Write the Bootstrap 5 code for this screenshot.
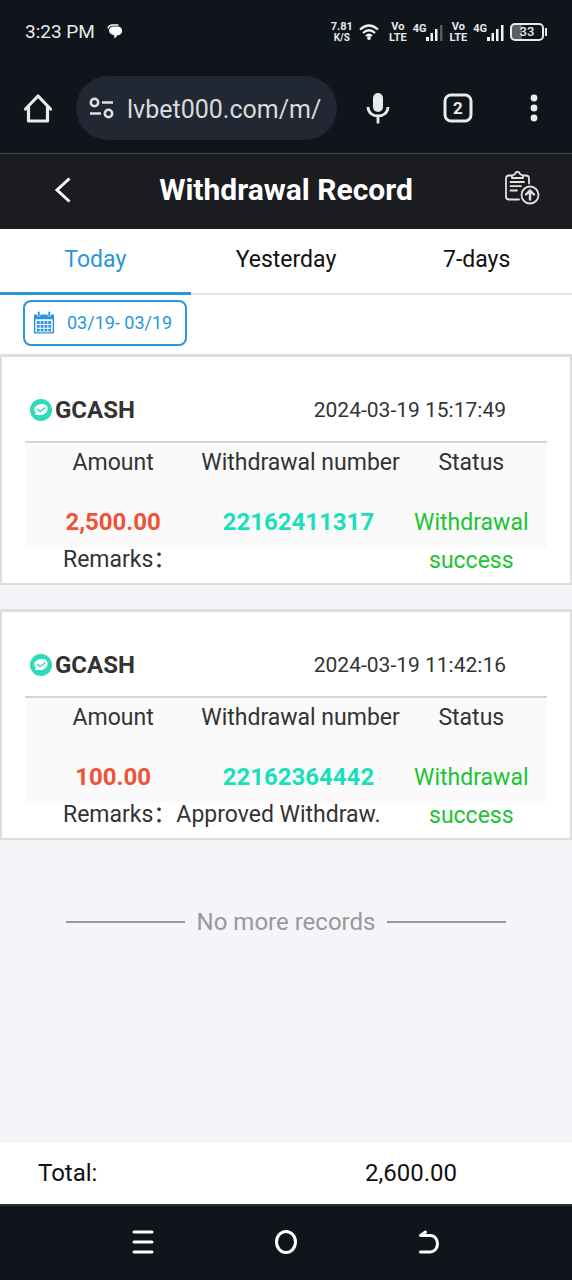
<!DOCTYPE html>
<html lang="en">
<head>
<meta charset="utf-8">
<meta name="viewport" content="width=device-width, initial-scale=1">
<title>Withdrawal Record</title>
<link rel="stylesheet" href="https://cdn.jsdelivr.net/npm/bootstrap@5.3.0/dist/css/bootstrap.min.css">
<style>
  body { font-family: Roboto, "Noto Sans CJK SC", sans-serif; font-size: 23px; line-height: 38px; color: #333; background: #f4f4f9; }
  svg { display: block; flex: none; }
  button { color: inherit; }
  .chrome { background: #0f151b; color: #e8eaec; }
  .status-row { height: 64px; padding: 0 25px; font-size: 19px; }
  .status-time { margin-right: 12px; }
  .indicators { gap: 6px; }
  .tiny { font-size: 11px; line-height: 11px; font-weight: 700; text-align: center; }
  .tiny small { font-size: 10px; }
  .tiny-net { font-size: 11px; line-height: 10px; font-weight: 700; align-self: flex-start; }
  .battery { width: 34px; height: 18px; border: 2px solid #e8eaec; border-radius: 5px; font-size: 13px; line-height: 14px; font-weight: 500; text-align: center; background: linear-gradient(90deg, #5b6066 33%, transparent 33%); }
  .battery-tip { width: 2px; height: 8px; background: #e8eaec; margin-left: 1px; }
  .tool-row { padding: 12px 22px 13px; border-bottom: 1px solid #45484b; }
  .address { height: 64px; border-radius: 32px; background: #212733; padding: 0 12px; margin: 0 27px 0 22px; gap: 11px; }
  .address input { font-size: 25px; color: #d9dbdc; background: transparent; border: 0; padding: 3px 0 0; min-width: 0; outline: 0; }
  .tabs-btn { margin: 0 45px 0 51px; }
  .plain { border: 0; background: none; padding: 0; }
  .title-bar { height: 75px; background: #1b1c20; color: #fff; padding-bottom: 4px; }
  .title-bar h1 { font-size: 30px; line-height: 38px; font-weight: 700; }
  .side { width: 125px; }
  .day-tabs { background: #fff; border-bottom: 2px solid #e4e4e4; }
  .day-tabs .nav-link { color: #111; height: 39px; padding: 12px 0; border-radius: 0; margin-bottom: -2px; box-sizing: content-box; border-bottom: 3px solid transparent; }
  .day-tabs .nav-link.active { color: #2b95dd; border-color: #2b95dd; }
  .date-row { background: #fff; padding: 5px 23px 8px; }
  .date-btn { height: 46px; border: 2px solid #2b95dd; border-radius: 8px; background: #fff; color: #2b95dd; font-size: 18px; line-height: 24px; padding: 0 13px 0 8px; }
  .record { background: #fff; border: 2px solid #dedee1; border-top-width: 3px; padding: 29px 23px 0; }
  .record + .record { margin-top: 24px; }
  .record-head { height: 57px; padding: 5px 41px 0 5px; border-bottom: 2px solid #d5d5d5; }
  .record-head h2 { font-size: 24px; line-height: 38px; font-weight: 700; }
  .record-head svg { margin-right: 3px; }
  .record-head time { font-size: 21px; }
  .record-table { table-layout: fixed; width: 100%; background: linear-gradient(#fafafa, #fafafa) 0 0 / 100% 105px no-repeat; }
  .record-table th, .record-table td { padding: 0; font-weight: 400; text-align: center; vertical-align: top; }
  .record-table th { height: 40px; padding-top: 1px; white-space: nowrap; }
  .record-table th:nth-child(-n+2), .record-table .amt, .record-table .num { padding-left: 4px; }
  .col-a { width: 33%; } .col-b { width: 38%; } .col-c { width: 29%; }
  .record-table .val { height: 58px; padding-top: 20px; font-size: 24px; font-weight: 700; }
  .record-table .amt { color: #ee5337; }
  .record-table .num { color: #1bdfba; }
  .record-table .stat { color: #1cc433; padding-top: 21px; }
  .record-table .remarks { text-align: left; padding-left: 38px; height: 42px; }
  .no-more { color: #999; font-size: 24px; padding: 63px 66px 0; gap: 12px; }
  .no-more hr { margin: 0; border-top: 2px solid #999; opacity: 1; }
  .total-row { background: #fff; color: #111; font-size: 24px; padding: 11px 115px 12px 38px; }
  .sys-nav { height: 76px; border-top: 2px solid #2b3035; color: #fff; padding: 0 71px 2px; }
</style>
</head>
<body class="d-flex flex-column min-vh-100">
<header>
  <div class="chrome">
    <div class="status-row d-flex align-items-center">
      <span class="status-time">3:23 PM</span>
      <svg width="16" height="16" viewBox="0 0 16 16" fill="#fff"><path d="M.8 4.500Q2 1 5.500 1h6" stroke="#fff" stroke-width="1.300" fill="none"/><path d="M6.500 2.500h4C13.500 2.500 15.200 4.500 15.200 7s-2.200 4.200-4.700 4.200L7.800 14.500 6.800 11C4 10.500 2 9 2 6.500S4 2.500 6.500 2.500Z"/></svg>
      <div class="indicators d-flex align-items-center ms-auto">
        <div class="tiny">7.81<br><small>K/S</small></div>
        <svg width="20" height="16" viewBox="0 0 20 16" fill="none" stroke="#f4f4f4" stroke-width="2.200"><path d="M1 5.500q9-8 18 0M4 9q6-5.500 12 0M7 12q3-2.500 6 0"/><circle cx="10" cy="14" r=".8"/></svg>
        <div class="tiny ms-1">Vo<br>LTE</div>
        <div class="d-flex align-items-end"><div class="tiny-net">4G</div>
        <svg width="17" height="17" viewBox="0 0 17 17" fill="#f4f4f4"><path d="M0 13h3v4H0zM4.500 9h2.500v8H4.500zM9 5h2.500v12H9z"/><path fill="#555b60" d="M14 1h2.500v16H14z"/></svg></div>
        <div class="tiny">Vo<br>LTE</div>
        <div class="d-flex align-items-end"><div class="tiny-net">4G</div>
        <svg width="17" height="17" viewBox="0 0 17 17" fill="#f4f4f4"><path d="M0 13h3v4H0zM4.500 9h2.500v8H4.500zM9 5h2.500v12H9zM14 1h2.500v16H14z"/></svg></div>
        <div class="d-flex align-items-center"><div class="battery">33</div><div class="battery-tip"></div></div>
      </div>
    </div>
    <div class="tool-row d-flex align-items-center">
      <button class="plain" aria-label="Home"><svg width="32" height="32" viewBox="0 0 32 32" fill="none" stroke="#e8eaec" stroke-width="3.200" stroke-linecap="round" stroke-linejoin="round"><path d="M3.500 17 16 4l12.500 13M6.500 15v14h19V15"/></svg></button>
      <div class="address flex-grow-1 d-flex align-items-center">
        <svg width="28" height="22" viewBox="0 0 28 22" fill="none" stroke="#dfe2e5" stroke-width="2.500"><circle cx="6.500" cy="5.500" r="3.700"/><path d="M14 5.500h11M2 16.500h11"/><circle cx="20.500" cy="16.500" r="3.700"/></svg>
        <input class="flex-grow-1" size="1" type="text" aria-label="Address" value="lvbet000.com/m/">
      </div>
      <button class="plain" aria-label="Voice search"><svg width="28" height="32" viewBox="0 0 28 32" fill="none" stroke="#e8eaec" stroke-width="2.800"><rect x="9" y="1" width="10" height="19" rx="5" fill="#e8eaec" stroke="none"/><path d="M4 15c0 12 20 12 20 0M14 24v7.500"/></svg></button>
      <button class="plain tabs-btn" aria-label="Tabs"><svg width="30" height="30" viewBox="0 0 30 30"><rect x="2" y="2" width="26" height="26" rx="6" fill="none" stroke="#e8eaec" stroke-width="3"/><text x="15" y="21" text-anchor="middle" font-size="17" font-weight="700" fill="#e8eaec">2</text></svg></button>
      <button class="plain" aria-label="Menu"><svg width="32" height="28" viewBox="0 0 32 28" fill="#e8eaec"><circle cx="16" cy="4" r="3.400"/><circle cx="16" cy="14" r="3.400"/><circle cx="16" cy="24" r="3.400"/></svg></button>
    </div>
  </div>
  <div class="title-bar d-flex align-items-center">
    <div class="side d-flex justify-content-center"><button class="plain" aria-label="Back"><svg width="18" height="28" viewBox="0 0 18 28" fill="none" stroke="#fff" stroke-width="3"><path d="M15.500 2.500 3 14l12.500 11.500"/></svg></button></div>
    <h1 class="flex-grow-1 text-center m-0">Withdrawal Record</h1>
    <div class="side d-flex justify-content-end pe-3"><button class="plain me-3 pb-1" aria-label="Submit record"><svg width="36" height="36" viewBox="0 0 36 36" fill="none" stroke="#e3e3e3" stroke-width="1.800" stroke-linecap="round" stroke-linejoin="round"><path d="M8 5.500H5Q2 5.500 2 8.500v18q0 3 3 3h10M19 5.500h3q3 0 3 3v5"/><path d="M8 8V5.500l2.500-1Q13.500-1 16.500 4.500l2.500 1V8ZM6.500 12H20M6.500 16.200H17M6.500 20.500H13"/><circle cx="26" cy="25" r="8.500"/><path stroke-width="2.400" d="M26 29.500v-9m-4 4 4-4 4 4"/></svg></button></div>
  </div>
  <nav class="nav nav-justified day-tabs">
    <a class="nav-link col active" href="#">Today</a>
    <a class="nav-link col" href="#">Yesterday</a>
    <a class="nav-link col" href="#">7-days</a>
  </nav>
  <div class="date-row">
    <button class="date-btn d-flex align-items-center"><svg class="me-2" width="22" height="24" viewBox="0 0 23 24" fill="#2b95dd"><path d="M1 3h3v1q2 3 4 0V3h7v1q2 3 4 0V3h3v5H1z"/><rect x="5" y="0" width="2" height="5" rx="1"/><rect x="16" y="0" width="2" height="5" rx="1"/><path fill="none" stroke="#2b95dd" stroke-width="1.500" d="M1.700 7v15.300h19.600V7"/><path d="M4 10h3v3H4zm4 0h3v3H8zm4 0h3v3h-3zm4 0h3v3h-3zM4 14h3v3H4zm4 0h3v3H8zm4 0h3v3h-3zm4 0h3v3h-3zM4 18h3v3H4zm4 0h3v3H8zm4 0h3v3h-3zm4 0h3v3h-3z"/></svg><span class="ms-1">03/19- 03/19</span></button>
  </div>
</header>
<main class="flex-grow-1">
  <article class="record">
    <div class="record-head d-flex justify-content-between">
      <div class="d-flex align-items-center align-self-start"><svg width="22" height="22" viewBox="0 0 22 22"><circle cx="11" cy="11" r="11" fill="#2bdcb8"/><path fill="#fff" d="M4.500 8.500Q7 5 12 5c4 0 6 2 5.500 5.500S14 16 10 16H5l.8-2.500Q3.500 11.500 4.500 8.500Z"/><path d="m7.500 10 2.500 2.500L15.500 8.500" fill="none" stroke="#2bdcb8" stroke-width="1.500"/></svg><h2 class="m-0">GCASH</h2></div>
      <time datetime="2024-03-19T15:17:49">2024-03-19 15:17:49</time>
    </div>
    <table class="record-table">
      <colgroup><col class="col-a"><col class="col-b"><col class="col-c"></colgroup>
      <tr><th scope="col">Amount</th><th scope="col">Withdrawal number</th><th scope="col">Status</th></tr>
      <tr><td class="val amt">2,500.00</td><td class="val num">22162411317</td><td class="stat" rowspan="2">Withdrawal success</td></tr>
      <tr><td class="remarks" colspan="2">Remarks：</td></tr>
    </table>
  </article>
  <article class="record">
    <div class="record-head d-flex justify-content-between">
      <div class="d-flex align-items-center align-self-start"><svg width="22" height="22" viewBox="0 0 22 22"><circle cx="11" cy="11" r="11" fill="#2bdcb8"/><path fill="#fff" d="M4.500 8.500Q7 5 12 5c4 0 6 2 5.500 5.500S14 16 10 16H5l.8-2.500Q3.500 11.500 4.500 8.500Z"/><path d="m7.500 10 2.500 2.500L15.500 8.500" fill="none" stroke="#2bdcb8" stroke-width="1.500"/></svg><h2 class="m-0">GCASH</h2></div>
      <time datetime="2024-03-19T11:42:16">2024-03-19 11:42:16</time>
    </div>
    <table class="record-table">
      <colgroup><col class="col-a"><col class="col-b"><col class="col-c"></colgroup>
      <tr><th scope="col">Amount</th><th scope="col">Withdrawal number</th><th scope="col">Status</th></tr>
      <tr><td class="val amt">100.00</td><td class="val num">22162364442</td><td class="stat" rowspan="2">Withdrawal success</td></tr>
      <tr><td class="remarks" colspan="2">Remarks：Approved Withdraw.</td></tr>
    </table>
  </article>
  <div class="no-more d-flex align-items-center"><hr class="flex-grow-1"><span>No more records</span><hr class="flex-grow-1"></div>
</main>
<footer>
  <div class="total-row d-flex justify-content-between"><span>Total:</span><span>2,600.00</span></div>
  <div class="sys-nav chrome d-flex align-items-center">
    <div class="col d-flex justify-content-center"><button class="plain" aria-label="Recent apps"><svg width="24" height="26" viewBox="0 0 24 26" stroke="#fff" stroke-width="3" stroke-linecap="round"><path d="M3 3h18M3 13h18M3 23h18"/></svg></button></div>
    <div class="col d-flex justify-content-center"><button class="plain" aria-label="Home screen"><svg width="24" height="26" viewBox="0 0 24 26" fill="none" stroke="#fff" stroke-width="3"><ellipse cx="12" cy="13" rx="9.500" ry="10.500"/></svg></button></div>
    <div class="col d-flex justify-content-center"><button class="plain" aria-label="Back"><svg width="24" height="26" viewBox="0 0 24 26" fill="none" stroke="#fff" stroke-width="3" stroke-linecap="round" stroke-linejoin="round"><path d="M8.500 3 3.500 6.500H13c10 0 10 16.500 0 16.500H3.500"/></svg></button></div>
  </div>
</footer>
<script src="https://cdn.jsdelivr.net/npm/bootstrap@5.3.0/dist/js/bootstrap.bundle.min.js"></script>
</body>
</html>
